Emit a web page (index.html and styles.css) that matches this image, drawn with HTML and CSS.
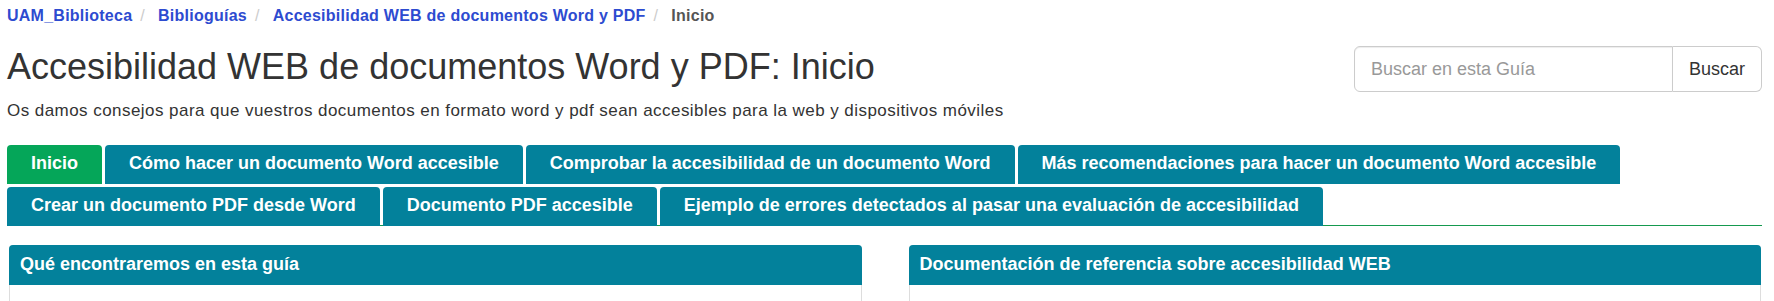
FILE: index.html
```html
<!DOCTYPE html>
<html lang="es">
<head>
<meta charset="utf-8">
<title>Accesibilidad WEB de documentos Word y PDF: Inicio</title>
<link rel="stylesheet" href="styles.css">
</head>
<body>
<div class="page">
  <ol class="breadcrumb">
    <li><a href="#">UAM_Biblioteca</a></li>
    <li><a href="#">Biblioguías</a></li>
    <li><a href="#">Accesibilidad WEB de documentos Word y PDF</a></li>
    <li class="active">Inicio</li>
  </ol>

  <header class="guide-header">
    <div class="guide-title">
      <h1>Accesibilidad WEB de documentos Word y PDF: Inicio</h1>
      <p>Os damos consejos para que vuestros documentos en formato word y pdf sean accesibles para la web y dispositivos móviles</p>
    </div>
    <form class="search">
      <input type="text" placeholder="Buscar en esta Guía">
      <button type="button">Buscar</button>
    </form>
  </header>

  <nav class="tabs">
    <ul>
      <li class="current"><a href="#">Inicio</a></li>
      <li><a href="#">Cómo hacer un documento Word accesible</a></li>
      <li><a href="#">Comprobar la accesibilidad de un documento Word</a></li>
      <li><a href="#">Más recomendaciones para hacer un documento Word accesible</a></li>
      <li><a href="#">Crear un documento PDF desde Word</a></li>
      <li><a href="#">Documento PDF accesible</a></li>
      <li><a href="#">Ejemplo de errores detectados al pasar una evaluación de accesibilidad</a></li>
    </ul>
  </nav>

  <div class="boxes">
    <section class="box">
      <h2 class="box-title">Qué encontraremos en esta guía</h2>
      <div class="box-body"></div>
    </section>
    <section class="box">
      <h2 class="box-title">Documentación de referencia sobre accesibilidad WEB</h2>
      <div class="box-body"></div>
    </section>
  </div>
</div>
</body>
</html>
```
FILE: styles.css
```css
html, body {
  margin: 0;
  padding: 0;
  background: #fff;
}

body {
  font-family: "Liberation Sans", Arial, sans-serif;
  color: #333;
}

.page {
  padding: 0 12px 0 7px;
}

/* Breadcrumb */
.breadcrumb {
  display: flex;
  list-style: none;
  margin: 0;
  padding: 6px 0 0;
  font-size: 16px;
  font-weight: bold;
  line-height: 20px;
  letter-spacing: 0.25px;
}

.breadcrumb a {
  color: #2d4bd0;
  text-decoration: none;
}

.breadcrumb li + li::before {
  content: "/";
  color: #ccc;
  font-weight: normal;
  padding: 0 13px 0 8px;
}

.breadcrumb .active {
  color: #555;
}

/* Header */
.guide-header {
  display: flex;
  justify-content: space-between;
  align-items: flex-start;
  margin-top: 20px;
}

.guide-title h1 {
  margin: 1px 0 0;
  font-size: 36px;
  font-weight: normal;
  line-height: 40px;
  color: #333;
}

.guide-title p {
  margin: 13px 0 0;
  font-size: 17px;
  letter-spacing: 0.45px;
  line-height: 22px;
  color: #333;
}

.search {
  display: flex;
  width: 408px;
  height: 46px;
  margin: 0;
}

.search input {
  flex: 1;
  min-width: 0;
  box-sizing: border-box;
  height: 46px;
  margin: 0;
  padding: 10px 16px;
  border: 1px solid #ccc;
  border-radius: 6px 0 0 6px;
  box-shadow: inset 0 1px 1px rgba(0, 0, 0, 0.075);
  font-family: "Liberation Sans", Arial, sans-serif;
  font-size: 18px;
  color: #555;
  outline: none;
}

.search input::placeholder {
  color: #999;
}

.search button {
  box-sizing: border-box;
  width: 89px;
  height: 46px;
  margin: 0;
  padding: 0 16px;
  border: 1px solid #ccc;
  border-left: none;
  border-radius: 0 6px 6px 0;
  background: #fff;
  font-family: "Liberation Sans", Arial, sans-serif;
  font-size: 18px;
  color: #333;
}

/* Tabs */
.tabs {
  margin-top: 23px;
  border-bottom: 1px solid #15994f;
}

.tabs ul {
  display: flex;
  flex-wrap: wrap;
  gap: 3px;
  list-style: none;
  margin: 0 0 -1px;
  padding: 0;
}

.tabs a {
  display: block;
  padding: 0 24px 3px;
  line-height: 36px;
  font-size: 18px;
  font-weight: bold;
  color: #fff;
  text-decoration: none;
  background: #03819b;
  border-radius: 4px 4px 0 0;
}

.tabs .current a {
  background: #05a659;
}

/* Boxes */
.boxes {
  display: grid;
  grid-template-columns: 1fr 1fr;
  column-gap: 47px;
  margin-top: 19px;
  padding: 0 1px 0 2px;
}

.box {
  border: 1px solid #ddd;
  border-radius: 4px;
  background: #fff;
}

.box-title {
  margin: -1px -1px 0;
  padding: 8px 11px 10px;
  background: #03819b;
  color: #fff;
  font-size: 18px;
  font-weight: bold;
  line-height: 22px;
  border-radius: 4px 4px 0 0;
}

.box-body {
  min-height: 60px;
}
```
